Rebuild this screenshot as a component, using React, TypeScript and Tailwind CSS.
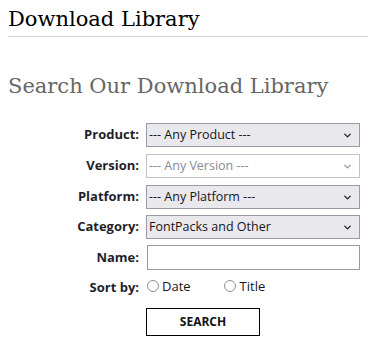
import { ChevronDown } from 'lucide-react';

const labelCls = "w-[131px] shrink-0 text-right text-[13px] font-bold text-[#1f1f2a]";

function Select({ value, disabled }: { value: string; disabled?: boolean }) {
  return (
    <div
      className={`ml-[7px] flex h-[24px] w-[214px] items-center justify-between border pl-[2px] pr-[6px] text-[12.5px] ${
        disabled
          ? 'border-[#c4c4c8] bg-white text-[#8a8a90]'
          : 'border-[#9a9aa4] bg-[#e9e9ed] text-[#15151a]'
      }`}
    >
      <span>{value}</span>
      <ChevronDown className={`h-[11px] w-[11px] ${disabled ? 'text-[#9a9aa0]' : 'text-[#222]'}`} strokeWidth={3} />
    </div>
  );
}

export default function App() {
  return (
    <div className="h-[340px] w-[368px] overflow-hidden bg-white pl-2" style={{ fontFamily: '"Open Sans", "DejaVu Sans", sans-serif' }}>
      {/* page title */}
      <h1 className="border-b border-[#d6d6d6] pb-[5px] pt-[7px] text-[21px] leading-[24px] text-black" style={{ fontFamily: '"DejaVu Serif", serif' }}>
        Download Library
      </h1>

      <h2 className="mt-[36px] text-[21px] leading-[26px] text-[#666]" style={{ fontFamily: '"DejaVu Serif", serif' }}>
        Search Our Download Library
      </h2>

      <form className="mt-[24px] flex flex-col">
        <div className="flex items-center">
          <label className={labelCls}>Product:</label>
          <Select value="--- Any Product ---" />
        </div>
        <div className="mt-[7px] flex items-center">
          <label className={labelCls}>Version:</label>
          <Select value="--- Any Version ---" disabled />
        </div>
        <div className="mt-[7px] flex items-center">
          <label className={labelCls}>Platform:</label>
          <Select value="--- Any Platform ---" />
        </div>
        <div className="mt-[6px] flex items-center">
          <label className={labelCls}>Category:</label>
          <Select value="FontPacks and Other" />
        </div>
        <div className="mt-[6px] flex items-center">
          <label className={labelCls}>Name:</label>
          <input className="ml-[8px] h-[25px] w-[213px] border border-[#9a9aa4] bg-white outline-none" />
        </div>
        <div className="mt-[5px] flex items-center">
          <label className={`${labelCls} pt-[3px]`}>Sort by:</label>
          <div className="ml-[8px] flex items-center text-[13px] text-[#15151a]">
            <span className="h-[12px] w-[12px] rounded-full border-[1.5px] border-[#8f8f9d]" />
            <span className="ml-[3px]">Date</span>
            <span className="ml-[33px] h-[12px] w-[12px] rounded-full border-[1.5px] border-[#8f8f9d]" />
            <span className="ml-[4px]">Title</span>
          </div>
        </div>
        <div className="mt-[10px] pl-[138px]">
          <button type="button" className="h-[28px] w-[114px] border border-black bg-white text-[12px] font-bold text-[#111]">
            SEARCH
          </button>
        </div>
      </form>
    </div>
  );
}
